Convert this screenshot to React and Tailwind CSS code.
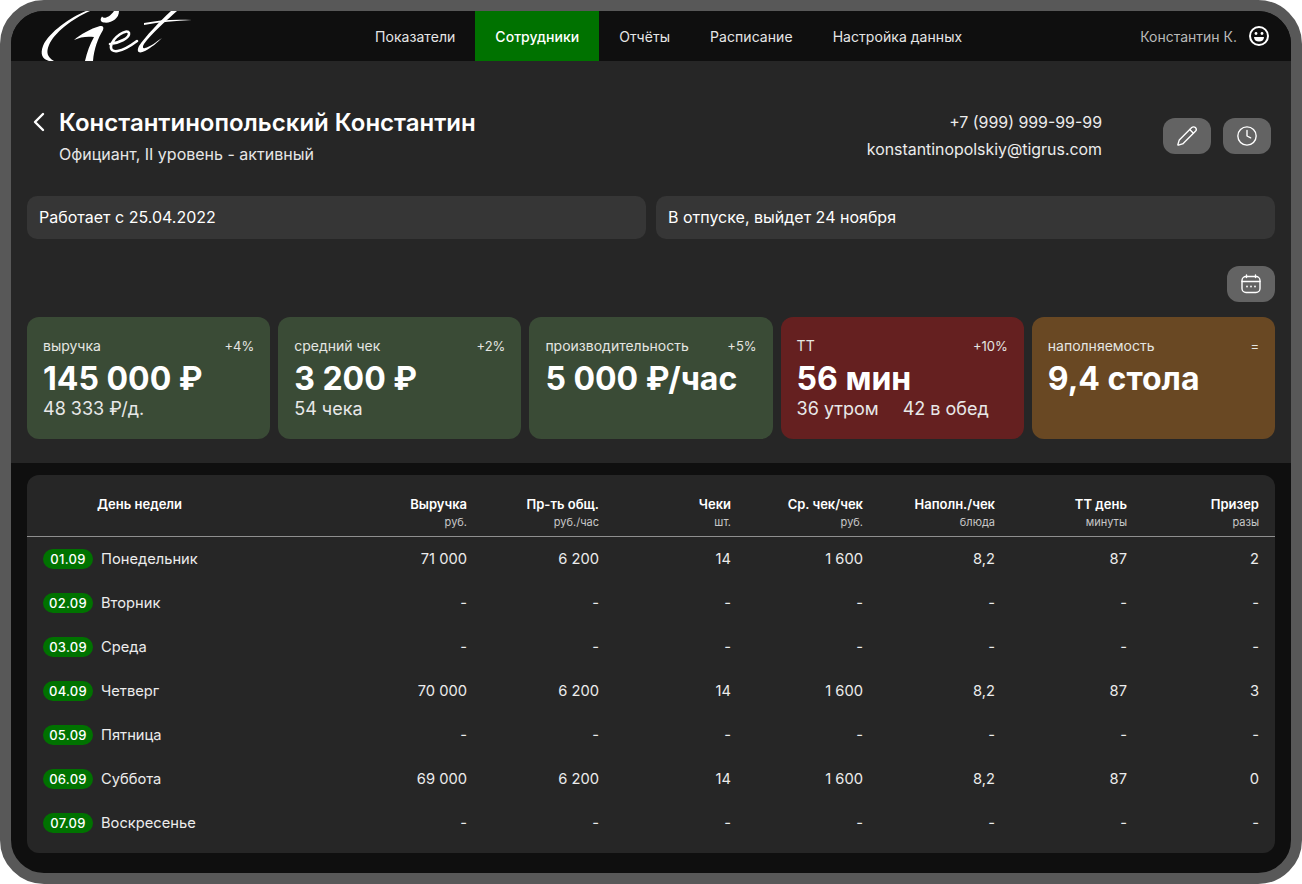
import React from "react";
import { ChevronLeft, Pencil, Clock } from "lucide-react";

const menu = ["Показатели", "Сотрудники", "Отчёты", "Расписание", "Настройка данных"];

const cards = [
  { title: "выручка", delta: "+4%", value: "145 000 ₽", sub: ["48 333 ₽/д."], bg: "bg-[#3a4b36]" },
  { title: "средний чек", delta: "+2%", value: "3 200 ₽", sub: ["54 чека"], bg: "bg-[#3a4b36]" },
  { title: "производительность", delta: "+5%", value: "5 000 ₽/час", sub: [], bg: "bg-[#3a4b36]" },
  { title: "ТТ", delta: "+10%", value: "56 мин", sub: ["36 утром", "42 в обед"], bg: "bg-[#652020]" },
  { title: "наполняемость", delta: "=", value: "9,4 стола", sub: [], bg: "bg-[#694823]" },
];

const columns = [
  ["Выручка", "руб."],
  ["Пр-ть общ.", "руб./час"],
  ["Чеки", "шт."],
  ["Ср. чек/чек", "руб."],
  ["Наполн./чек", "блюда"],
  ["ТТ день", "минуты"],
  ["Призер", "разы"],
];

const empty = ["-", "-", "-", "-", "-", "-", "-"];

const rows = [
  { date: "01.09", day: "Понедельник", values: ["71 000", "6 200", "14", "1 600", "8,2", "87", "2"] },
  { date: "02.09", day: "Вторник", values: empty },
  { date: "03.09", day: "Среда", values: empty },
  { date: "04.09", day: "Четверг", values: ["70 000", "6 200", "14", "1 600", "8,2", "87", "3"] },
  { date: "05.09", day: "Пятница", values: empty },
  { date: "06.09", day: "Суббота", values: ["69 000", "6 200", "14", "1 600", "8,2", "87", "0"] },
  { date: "07.09", day: "Воскресенье", values: empty },
];

const Logo = () => (
  <svg width="156" height="50" viewBox="0 0 156 50" fill="#fff" className="block">
    {/* big C swash */}
    <path d="M46 0C31 6 9 21 3 35C0 43 2 48 9 50L14 50C7 46 6 41 9 34C14 22 32 8 50 0Z" />
    {/* G body */}
    <path d="M34 29C41 23 50 18 60 15C63 14.5 64 16 63 19C58 27 54 38 53 50L45 50C47 41 50 33 54 26C47 25 40 26 34 29Z" />
    {/* hook over the G */}
    <path d="M79 0C79 8 71 12.5 64 11.5C60 11 60 8 62 5.5C64 8 69 7 74 0Z" />
    {/* e */}
    <path d="M70 33C79 32 90 27 89 22C87 17 73 26 71 35C70 43 81 42 97 30" fill="none" stroke="#fff" strokeWidth="2.6" strokeLinecap="round" />
    {/* t */}
    <path d="M131 0C120 10 105 26 99 35C96 41 99 43 105 40C111 37 118 31 122 27C116 31 110 36 105 37C103 38 102 36 104 33C111 23 128 8 137 0Z" />
    {/* crossbar */}
    <path d="M104 12C118 9 135 8 152 9C135 10 120 11 104 14Z" />
  </svg>
);

const SmileIcon = () => (
  <svg width="20" height="20" viewBox="0 0 20 20" fill="none">
    <circle cx="10" cy="10" r="9" stroke="#fff" strokeWidth="2" />
    <circle cx="7" cy="7.5" r="1.4" fill="#fff" />
    <circle cx="13" cy="7.5" r="1.4" fill="#fff" />
    <path d="M5 11H15C15 14 13 15.5 10 15.5C7 15.5 5 14 5 11Z" fill="#fff" />
  </svg>
);

const IconButton = ({ children }) => (
  <button className="w-12 h-9 rounded-xl bg-[#636363] flex items-center justify-center text-white">
    {children}
  </button>
);

const CalendarIcon = () => (
  <svg width="20" height="20" viewBox="0 0 20 20" fill="none" stroke="#fff" strokeWidth="1.4">
    <rect x="1" y="2.5" width="18" height="16" rx="4" />
    <path d="M1 7.5H19M5.5 1V3.5M14.5 1V3.5" strokeLinecap="round" />
    <circle cx="6" cy="12.5" r="0.9" fill="#fff" stroke="none" />
    <circle cx="10" cy="12.5" r="0.9" fill="#fff" stroke="none" />
    <circle cx="14" cy="12.5" r="0.9" fill="#fff" stroke="none" />
  </svg>
);

const StatCard = ({ card }) => (
  <div className={`${card.bg} rounded-xl h-[122px] px-4 pt-5 text-white`}>
    <div className="flex justify-between items-center h-5 text-[#e4e6e2]">
      <span className="text-sm pb-[2px]">{card.title}</span>
      <span className="text-[13px]">{card.delta}</span>
    </div>
    <div className="text-[32px] leading-[41px] mt-[1px] font-bold">{card.value}</div>
    <div className="flex gap-6 text-lg leading-5 text-[#e8e8e8]">
      {card.sub.map((s) => (
        <span key={s}>{s}</span>
      ))}
    </div>
  </div>
);

export default function App() {
  return (
    <div className="w-[1302px] h-[884px] bg-white font-['Inter',sans-serif]">
      <div className="w-full h-full rounded-[44px] border-[11px] border-[#585858] bg-[#0f0f0f] overflow-hidden flex flex-col">
        <header className="h-[50px] flex items-stretch shrink-0 bg-[#0f0f0f]">
          <div className="w-[344px] pl-[29px]">
            <Logo />
          </div>
          <nav className="flex text-sm tracking-[0.05px] text-[#e6e6e6]">
            {menu.map((item) => (
              <a
                key={item}
                className={`px-5 pt-[1px] flex items-center ${
                  item === "Сотрудники" ? "bg-[#007200] text-white font-medium" : ""
                }`}
              >
                {item}
              </a>
            ))}
          </nav>
          <div className="ml-auto pr-[22px] flex items-center gap-3 text-sm text-[#b9b9b9]">
            <span className="pt-[1px]">Константин К.</span>
            <SmileIcon />
          </div>
        </header>

        <section className="h-[402px] shrink-0 bg-[#262626] px-4 text-white">
          <div className="flex items-start pt-[46px]">
            <ChevronLeft size={32} strokeWidth={1.8} className="-mt-[1px] -ml-[4px] mr-[4px]" />
            <div>
              <h1 className="text-[24px] leading-8 font-semibold">Константинопольский Константин</h1>
              <p className="text-base leading-5 mt-[5px] text-[#e6e6e6]">Официант, II уровень - активный</p>
            </div>
            <div className="ml-auto text-[15.9px] leading-[27px] text-right text-[#ececec] pt-[2px]">
              <div>+7 (999) 999-99-99</div>
              <div>konstantinopolskiy@tigrus.com</div>
            </div>
            <div className="flex gap-3 ml-[61px] mr-1 mt-[11px]">
              <IconButton>
                <Pencil size={22} strokeWidth={1.5} />
              </IconButton>
              <IconButton>
                <Clock size={22} strokeWidth={1.5} />
              </IconButton>
            </div>
          </div>

          <div className="grid grid-cols-2 gap-[10px] mt-8">
            <div className="h-[43px] rounded-[10px] bg-[#363636] px-3 pb-[2px] flex items-center text-base">Работает с 25.04.2022</div>
            <div className="h-[43px] rounded-[10px] bg-[#363636] px-3 pb-[2px] flex items-center text-base">В отпуске, выйдет 24 ноября</div>
          </div>

          <div className="flex justify-end mt-[27px]">
            <IconButton>
              <CalendarIcon />
            </IconButton>
          </div>

          <div className="grid grid-cols-5 gap-2 mt-[15px]">
            {cards.map((card) => (
              <StatCard key={card.title} card={card} />
            ))}
          </div>
        </section>

        <section className="flex-1 px-4 pt-3 pb-5">
          <div className="h-full rounded-xl bg-[#262626] text-white">
            <div className="grid grid-cols-[308px_repeat(7,132px)] h-[62px] pr-4 border-b border-[#8f8f8f]">
              <div className="pl-[70px] pt-[22px] text-[13px] leading-[15px] font-semibold">День недели</div>
              {columns.map(([title, unit]) => (
                <div key={title} className="text-right pt-[22px]">
                  <div className="text-[13px] leading-[15px] font-semibold">{title}</div>
                  <div className="text-[11px] leading-3 mt-1 text-[#c8c8c8]">{unit}</div>
                </div>
              ))}
            </div>
            {rows.map((row) => (
              <div key={row.date} className="grid grid-cols-[308px_repeat(7,132px)] h-11 pr-4 items-center">
                <div className="pl-4 flex items-center gap-2 text-[14.7px] text-[#ececec]">
                  <span className="w-[50px] h-5 pt-[1px] rounded-full bg-[#007200] flex items-center justify-center text-[13px] tracking-[0.02em] font-medium text-white">
                    {row.date}
                  </span>
                  <span>{row.day}</span>
                </div>
                {row.values.map((v, i) => (
                  <div key={i} className="text-right text-[14.7px] text-[#ececec]">{v}</div>
                ))}
              </div>
            ))}
          </div>
        </section>
      </div>
    </div>
  );
}
